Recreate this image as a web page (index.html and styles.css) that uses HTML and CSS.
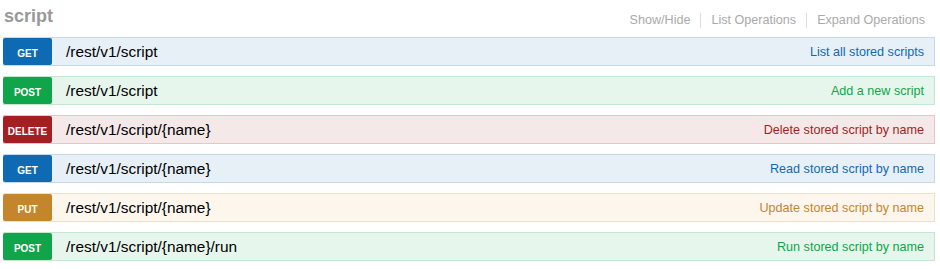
FILE: index.html
```html
<!DOCTYPE html>
<html lang="en">
<head>
    <meta charset="UTF-8">
    <title>script</title>
    <link rel="stylesheet" href="styles.css">
</head>
<body>
<div class="resource">
    <div class="resource-heading">
        <h2>script</h2>
        <ul class="options">
            <li><a href="#">Show/Hide</a></li>
            <li><a href="#">List Operations</a></li>
            <li><a href="#">Expand Operations</a></li>
        </ul>
    </div>
    <ul class="operations">
        <li class="operation get">
            <span class="method">GET</span>
            <span class="path">/rest/v1/script</span>
            <span class="summary">List all stored scripts</span>
        </li>
        <li class="operation post">
            <span class="method">POST</span>
            <span class="path">/rest/v1/script</span>
            <span class="summary">Add a new script</span>
        </li>
        <li class="operation delete">
            <span class="method">DELETE</span>
            <span class="path">/rest/v1/script/{name}</span>
            <span class="summary">Delete stored script by name</span>
        </li>
        <li class="operation get">
            <span class="method">GET</span>
            <span class="path">/rest/v1/script/{name}</span>
            <span class="summary">Read stored script by name</span>
        </li>
        <li class="operation put">
            <span class="method">PUT</span>
            <span class="path">/rest/v1/script/{name}</span>
            <span class="summary">Update stored script by name</span>
        </li>
        <li class="operation post">
            <span class="method">POST</span>
            <span class="path">/rest/v1/script/{name}/run</span>
            <span class="summary">Run stored script by name</span>
        </li>
    </ul>
</div>
</body>
</html>
```

FILE: styles.css
```css
body {
    font-family: "Liberation Sans", Arial, sans-serif;
    margin: 0;
    padding: 0 5px 0 3px;
    background-color: #fff;
}

.resource-heading {
    display: flex;
    justify-content: space-between;
    align-items: center;
    height: 37px;
}

.resource-heading h2 {
    margin: 0 0 4px 1px;
    font-size: 18px;
    font-weight: bold;
    color: #999;
}

.options {
    display: flex;
    list-style: none;
    margin: 3px 0 0 0;
    padding: 0;
}

.options li {
    padding: 0 10px;
    border-left: 1px solid #ddd;
    font-size: 12.6px;
    line-height: 15px;
}

.options li:first-child {
    border-left: none;
}

.options a {
    color: #aaa;
    text-decoration: none;
}

.operations {
    list-style: none;
    margin: 0;
    padding: 0;
}

.operation {
    display: flex;
    align-items: center;
    height: 27px;
    margin-bottom: 10px;
    border: 1px solid;
    border-left: none;
}

.method {
    width: 49px;
    height: 24px;
    padding-top: 3px;
    display: flex;
    align-items: center;
    justify-content: center;
    font-size: 10px;
    font-weight: bold;
    color: white;
    border-radius: 2px;
}

.path {
    margin-left: 14px;
    font-size: 15.4px;
    color: #000;
}

.summary {
    margin-left: auto;
    padding-right: 10px;
    font-size: 12.6px;
}

/* 颜色按请求方法区分 */
.get {
    background-color: #e7f0f7;
    border-color: #c3d9ec;
}

.get .method {
    background-color: #0f6ab4;
}

.get .summary {
    color: #0f6ab4;
}

.post {
    background-color: #e7f6ec;
    border-color: #c3e8d1;
}

.post .method {
    background-color: #10a54a;
}

.post .summary {
    color: #10a54a;
}

.delete {
    background-color: #f5e8e8;
    border-color: #e8c6c7;
}

.delete .method {
    background-color: #a41e22;
}

.delete .summary {
    color: #a41e22;
}

.put {
    background-color: #fcf6ed;
    border-color: #f0e0ca;
}

.put .method {
    background-color: #c5862b;
}

.put .summary {
    color: #c5862b;
}
```
